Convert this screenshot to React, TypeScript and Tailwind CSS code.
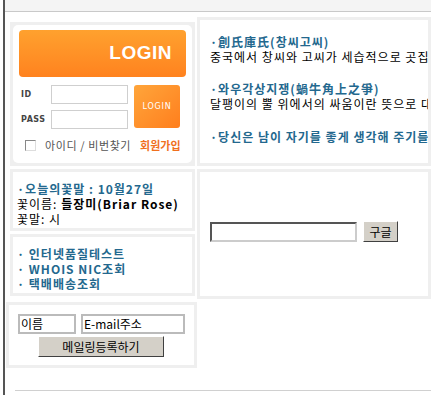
import React from 'react';

const KR = { fontFamily: '"Noto Sans CJK KR", "Noto Sans", sans-serif' };

const Panel = ({ className = '', inner = '', children }: { className?: string; inner?: string; children: React.ReactNode }) => (
  <div className={`bg-[#efefef] p-[3px] ${className}`}>
    <div className={`bg-white h-full ${inner}`}>{children}</div>
  </div>
);

const LoginBox = () => (
  <Panel className="h-[144px]" inner="rounded-[5px] px-[6px] pt-[5px]">
    <div className="h-[47px] rounded-[4px] bg-gradient-to-b from-[#ffa12e] to-[#ff821f] flex items-center justify-end pr-[14px]">
      <span className="text-white font-bold text-[19px] tracking-[0.5px] font-['Liberation_Sans',sans-serif]">LOGIN</span>
    </div>
    <div className="flex mt-[8px]">
      <div className="flex flex-col gap-[6px]">
        <div className="flex items-center h-[19px]">
          <span className="w-[32px] pl-[2px] text-[8px] font-bold text-[#444] tracking-[0.5px] font-['DejaVu_Sans',sans-serif]">ID</span>
          <div className="w-[77px] h-[19px] border border-[#cfcfcf]" />
        </div>
        <div className="flex items-center h-[19px]">
          <span className="w-[32px] pl-[2px] text-[8px] font-bold text-[#444] tracking-[0.5px] font-['DejaVu_Sans',sans-serif]">PASS</span>
          <div className="w-[77px] h-[19px] border border-[#cfcfcf]" />
        </div>
      </div>
      <div className="ml-[6px] w-[46px] h-[43px] rounded-[3px] bg-gradient-to-br from-[#ffa53a] to-[#ff7e1c] flex items-center justify-center">
        <span className="text-white text-[8px] tracking-[0.8px] font-['DejaVu_Sans',sans-serif]">LOGIN</span>
      </div>
    </div>
    <div className="flex items-center mt-[8px] pl-[6px] whitespace-nowrap">
      <div className="w-[11px] h-[11px] border border-[#888] border-r-[#ddd] border-b-[#ddd] bg-white shrink-0" />
      <span className="ml-[9px] text-[11px] text-[#555] tracking-[0.6px]" style={KR}>아이디 / 비번찾기</span>
      <span className="ml-[9px] text-[11px] font-bold text-[#f0701e]" style={KR}>회원가입</span>
    </div>
  </Panel>
);

const Blue = ({ children }: { children: React.ReactNode }) => (
  <div className="text-[12px] leading-[15px] font-bold text-[#23688e] whitespace-nowrap tracking-[1px]" style={KR}>{children}</div>
);

const Line = ({ children }: { children: React.ReactNode }) => (
  <div className="text-[12px] leading-[15px] text-black whitespace-nowrap tracking-[1px]" style={KR}>{children}</div>
);

export default function App() {
  return (
    <div className="w-[431px] h-[395px] bg-white overflow-hidden">
      <div className="ml-[3px] h-full border-l-[2px] border-[#555] flex flex-col">
        <div className="h-[12px] bg-[#f4f4f4] border-b border-[#c9c9c9] shrink-0" />
        <div className="flex gap-[2px] pl-[5px]">
          <div className="w-[185px] flex flex-col gap-[3px] pt-[10px]">
            <LoginBox />
            <Panel className="h-[62px]" inner="px-[4px] pt-[9px]">
              <Blue>·오늘의꽃말 : 10월27일</Blue>
              <Line>꽃이름: <b>들장미(Briar Rose)</b></Line>
              <Line>꽃말: 시</Line>
            </Panel>
            <Panel className="h-[62px]" inner="px-[4px] pt-[9px]">
              <Blue>· 인터넷품질테스트</Blue>
              <Blue>· WHOIS NIC조회</Blue>
              <Blue>· 택배배송조회</Blue>
            </Panel>
          </div>
          <div className="flex-1 flex flex-col gap-[3px] pt-[5px] min-w-0">
            <Panel className="h-[149px]" inner="pl-[10px] pt-[14px] overflow-hidden">
              <Blue>·創氏庫氏(창씨고씨)</Blue>
              <Line>중국에서 창씨와 고씨가 세습적으로 곳집을 맡아 관리한</Line>
              <div className="h-[17px]" />
              <Blue>·와우각상지쟁(蝸牛角上之爭)</Blue>
              <Line>달팽이의 뿔 위에서의 싸움이란 뜻으로 대수롭지 않은</Line>
              <div className="h-[18px]" />
              <Blue>·당신은 남이 자기를 좋게 생각해 주기를 바라는가</Blue>
            </Panel>
            <Panel className="h-[130px]" inner="flex items-center pl-[10px] pb-[5px]">
              <div className="w-[147px] h-[20px] border-2 border-[#555] border-r-[#ccc] border-b-[#ccc] bg-white" />
              <div className="ml-[6px] w-[35px] h-[21px] bg-[#d4d0c8] border border-[#fff] border-r-[#404040] border-b-[#404040] flex items-center justify-center text-[12px] text-black" style={KR}>구글</div>
            </Panel>
          </div>
        </div>
        <div className="w-[191px] mt-[3px] ml-[1px]">
          <Panel className="h-[66px]" inner="px-[9px] pt-[9px]">
            <div className="flex gap-[5px]">
              <div className="w-[58px] h-[20px] border-2 border-[#bbb] text-[12px] leading-[16px] pl-[1px]" style={KR}>이름</div>
              <div className="w-[104px] h-[20px] border-2 border-[#bbb] text-[12px] leading-[16px] pl-[1px]" style={KR}>E-mail주소</div>
            </div>
            <div className="ml-[20px] mt-[2px] w-[126px] h-[21px] bg-[#d4d0c8] border border-[#fff] border-r-[#404040] border-b-[#404040] flex items-center justify-center text-[12px] text-black" style={KR}>메일링등록하기</div>
          </Panel>
        </div>
        <div className="mt-auto mb-[4px] ml-[10px] border-t border-[#d0d0d0]" />
      </div>
    </div>
  );
}
